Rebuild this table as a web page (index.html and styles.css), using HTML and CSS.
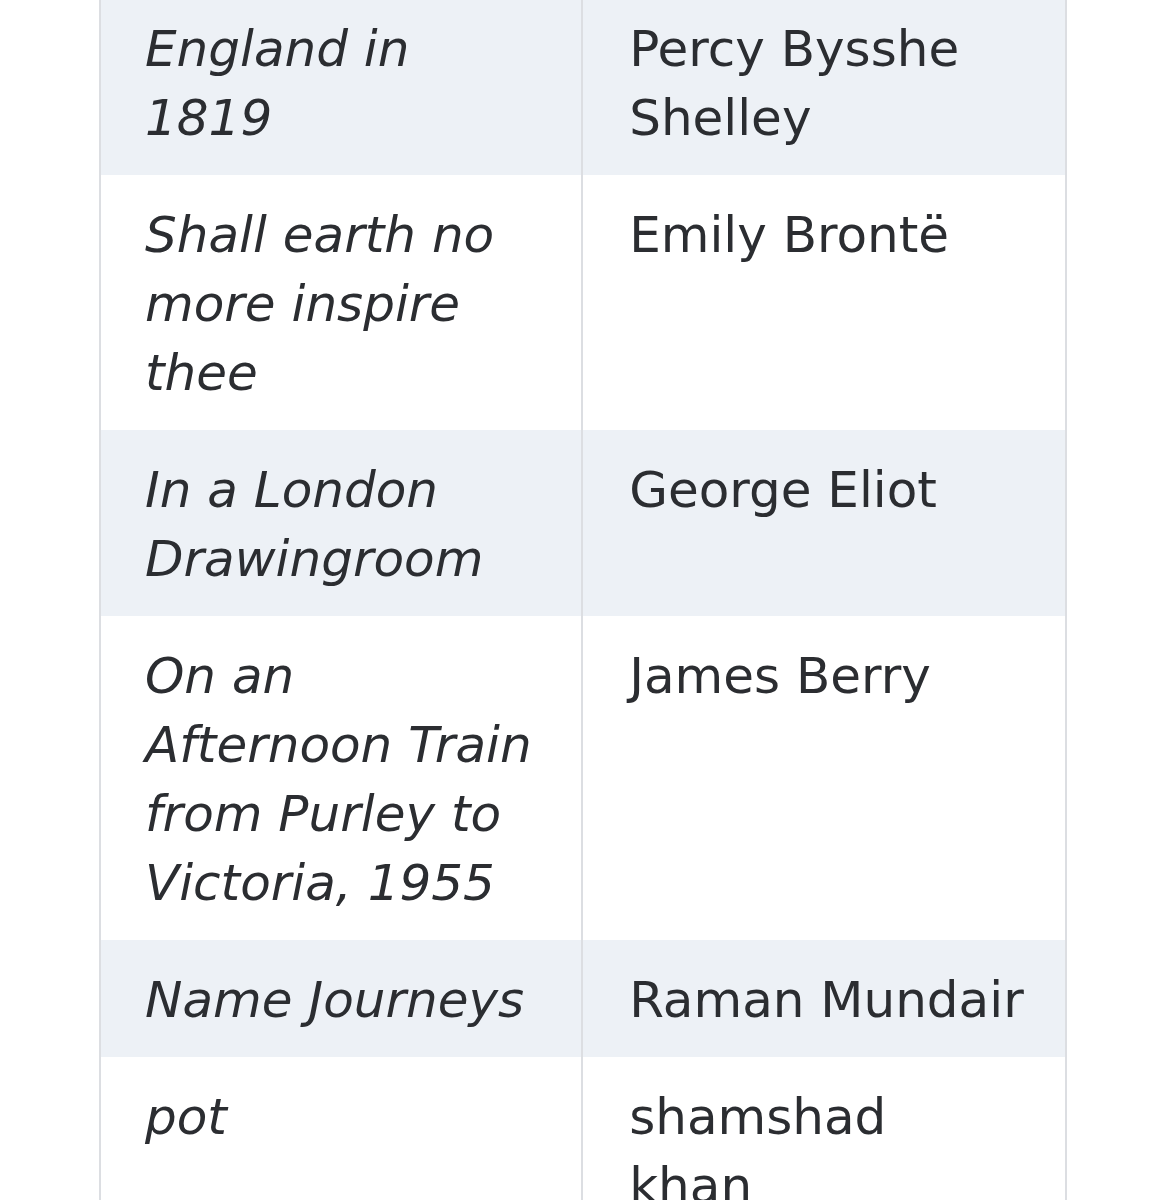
FILE: index.html
```html
<!DOCTYPE html>
<html lang="en">
<head>
<meta charset="utf-8">
<title>Poems</title>
<link rel="stylesheet" href="styles.css">
</head>
<body>
<table class="poems">
  <tbody>
    <tr class="alt"><td class="title">England in 1819</td><td class="poet">Percy Bysshe Shelley</td></tr>
    <tr><td class="title">Shall earth no more inspire thee</td><td class="poet">Emily Brontë</td></tr>
    <tr class="alt"><td class="title">In a London Drawingroom</td><td class="poet">George Eliot</td></tr>
    <tr><td class="title">On an Afternoon Train from Purley to Victoria, 1955</td><td class="poet">James Berry</td></tr>
    <tr class="alt"><td class="title">Name Journeys</td><td class="poet">Raman Mundair</td></tr>
    <tr><td class="title">pot</td><td class="poet">shamshad<br>khan</td></tr>
  </tbody>
</table>
</body>
</html>
```
FILE: styles.css
```css
html, body {
  margin: 0;
  padding: 0;
  background: #ffffff;
}
body {
  font-family: "DejaVu Sans", Verdana, sans-serif;
  color: #2b2d31;
  overflow: hidden;
}
.poems {
  border-collapse: collapse;
  table-layout: fixed;
  width: 968px;
  margin: -11px 0 0 99px;
  font-size: 50px;
  line-height: 69px;
}
.poems td {
  width: 50%;
  padding: 26px 40px 22px 44px;
  vertical-align: top;
  border-left: 2px solid #dcdee2;
  border-right: 2px solid #dcdee2;
}
.poems td.poet {
  padding-left: 46px;
}
.poems tr.alt td {
  background: #edf1f6;
}
.poems .title {
  font-style: italic;
}
```
